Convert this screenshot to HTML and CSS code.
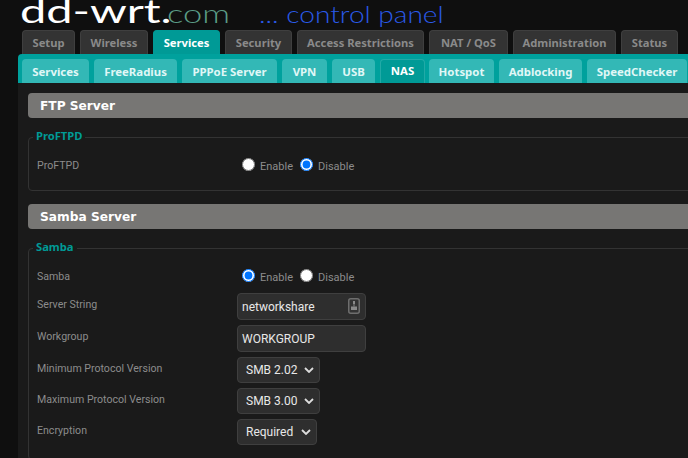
FILE: index.html
```html
<!DOCTYPE html>
<html>
<head>
    <title>DD-WRT control panel</title>
    <link rel="stylesheet" href="styles.css">
</head>
<body>
    <div class="header">
        <div class="logo-name"><span>dd-wrt.</span></div>
        <div class="logo-com"><span>com</span></div>
        <div class="logo-panel"><span>... control panel</span></div>
    </div>

    <div class="menu">
        <a class="tab w-setup">Setup</a>
        <a class="tab w-wireless">Wireless</a>
        <a class="tab active w-services">Services</a>
        <a class="tab w-security">Security</a>
        <a class="tab w-access">Access Restrictions</a>
        <a class="tab w-nat">NAT / QoS</a>
        <a class="tab w-admin">Administration</a>
        <a class="tab w-status">Status</a>
    </div>

    <div class="panel">
        <div class="submenu">
            <a class="subtab s-services">Services</a>
            <a class="subtab s-radius">FreeRadius</a>
            <a class="subtab s-pppoe">PPPoE Server</a>
            <a class="subtab s-vpn">VPN</a>
            <a class="subtab s-usb">USB</a>
            <a class="subtab active s-nas">NAS</a>
            <a class="subtab s-hotspot">Hotspot</a>
            <a class="subtab s-adblock">Adblocking</a>
            <a class="subtab s-speed">SpeedChecker</a>
        </div>

        <div class="content">
            <h2>FTP Server</h2>
            <fieldset class="ftp">
                <legend>ProFTPD</legend>
                <div class="row radio-row">
                    <label>ProFTPD</label>
                    <div class="radios">
                        <input type="radio" name="ftp"><span class="opt">Enable</span>
                        <input type="radio" name="ftp" checked><span class="opt">Disable</span>
                    </div>
                </div>
            </fieldset>

            <h2>Samba Server</h2>
            <fieldset class="samba">
                <legend>Samba</legend>
                <div class="row radio-row">
                    <label>Samba</label>
                    <div class="radios">
                        <input type="radio" name="smb" checked><span class="opt">Enable</span>
                        <input type="radio" name="smb"><span class="opt">Disable</span>
                    </div>
                </div>
                <div class="row">
                    <label>Server String</label>
                    <div class="field">
                        <input class="text" type="text" value="networkshare">
                        <svg class="key-icon" width="12" height="16" viewBox="0 0 12 16">
                            <rect x="0.75" y="0.75" width="10.5" height="14.5" rx="2" fill="#333" stroke="#6e6e6e" stroke-width="1.5"/>
                            <rect x="5" y="3" width="2" height="3" fill="#8a8a8a"/>
                            <rect x="5.4" y="6" width="1.2" height="2.5" fill="#777"/>
                            <rect x="3" y="8.5" width="6" height="3.5" fill="#8a8a8a"/>
                        </svg>
                    </div>
                </div>
                <div class="row">
                    <label>Workgroup</label>
                    <div class="field">
                        <input class="text" type="text" value="WORKGROUP">
                    </div>
                </div>
                <div class="row sel-row">
                    <label>Minimum Protocol Version</label>
                    <select class="sel sel-wide"><option>SMB 2.02</option></select>
                </div>
                <div class="row sel-row">
                    <label>Maximum Protocol Version</label>
                    <select class="sel sel-wide"><option>SMB 3.00</option></select>
                </div>
                <div class="row sel-row">
                    <label>Encryption</label>
                    <select class="sel sel-short"><option>Required</option></select>
                </div>
            </fieldset>
        </div>
    </div>
</body>
</html>
```

FILE: styles.css
```css
html, body {
    margin: 0;
    padding: 0;
    height: 458px;
    overflow: hidden;
}

body {
    width: 688px;
    background-color: #0f0f0f;
    font-family: "Roboto", "Noto Sans", sans-serif;
    color: #8c8c8c;
}

/* logo strip */
.header {
    height: 30px;
    display: flex;
    overflow: hidden;
    font-family: "Lato", sans-serif;
    white-space: nowrap;
}

.header span {
    display: block;
    transform-origin: left top;
}

.logo-name {
    width: 147px;
    margin-left: 20px;
    font-size: 33px;
    line-height: 34px;
    color: #fff;
}

.logo-name span {
    margin-top: -7px;
    transform: scaleX(1.42);
}

.logo-com {
    width: 92px;
    font-size: 25px;
    font-weight: 300;
    line-height: 30px;
    color: #5b9c86;
}

.logo-com span {
    margin-top: -2px;
    transform: scaleX(1.38);
}

.logo-panel {
    font-size: 23px;
    font-weight: 300;
    line-height: 28px;
    color: #2a5ae8;
}

.logo-panel span {
    transform: scaleX(1.22);
}

/* main tabs */
.menu {
    display: flex;
    gap: 5px;
    padding-left: 22px;
    height: 24px;
}

.tab {
    box-sizing: border-box;
    height: 24px;
    background-color: #333;
    border: 1px solid #3f3f3f;
    border-bottom: none;
    border-radius: 4px 4px 0 0;
    font-family: "Noto Sans", sans-serif;
    font-weight: bold;
    font-size: 11.2px;
    line-height: 24px;
    text-align: center;
    color: #8a8a8a;
    white-space: nowrap;
}

.tab.active {
    background-color: #009a96;
    border-color: #009a96;
    color: #fff;
}

.w-setup { width: 53px; }
.w-wireless { width: 68px; }
.w-services { width: 67px; }
.w-security { width: 67px; }
.w-access { width: 127px; }
.w-nat { width: 79px; }
.w-admin { width: 103px; }
.w-status { width: 57px; }

/* sub tabs and content */
.panel {
    margin-left: 18px;
    width: 720px;
}

.submenu {
    display: flex;
    gap: 5px;
    height: 24px;
    padding: 5px 0 0 4px;
    background-color: #00a19d;
    border-radius: 4px 0 0 0;
}

.subtab {
    flex: none;
    box-sizing: border-box;
    height: 24px;
    background-color: #33b8b6;
    border-radius: 4px 4px 0 0;
    font-family: "Noto Sans", sans-serif;
    font-weight: bold;
    font-size: 11.4px;
    line-height: 25px;
    text-align: center;
    color: #e0f7f6;
    white-space: nowrap;
}

.subtab.active {
    background-color: #009a96;
    border: 1px solid #22aaa7;
    border-bottom: none;
    color: #fff;
    line-height: 22px;
}

.s-services { width: 67px; }
.s-radius { width: 83px; }
.s-pppoe { width: 95px; }
.s-vpn { width: 45px; }
.s-usb { width: 43px; }
.s-nas { width: 45px; }
.s-hotspot { width: 65px; margin-left: -1px; }
.s-adblock { width: 83px; }
.s-speed { width: 100px; }

.content {
    background-color: #1a1a1a;
    height: 375px;
    padding: 10px 0 0 10px;
    box-sizing: border-box;
}

h2 {
    margin: 0;
    height: 25px;
    padding-left: 12px;
    background-color: #777674;
    border-radius: 4px 0 0 4px;
    font-family: "DejaVu Sans", sans-serif;
    font-size: 12.2px;
    font-weight: bold;
    line-height: 27px;
    color: #fff;
}

fieldset {
    margin: 11px 0 0 0;
    padding: 0 0 0 8px;
    border: 1px solid #333;
    border-radius: 4px;
}

.ftp {
    height: 62px;
    box-sizing: border-box;
    margin-bottom: 13px;
}

.samba {
    height: 220px;
    box-sizing: border-box;
}

legend {
    padding: 0 3px 2px;
    margin-left: -4px;
    font-family: "Noto Sans", sans-serif;
    font-weight: bold;
    font-size: 11.2px;
    line-height: 14px;
    color: #009a96;
}

.row {
    display: flex;
    height: 32px;
    font-size: 10.6px;
}

.row label {
    width: 200px;
    flex: none;
    line-height: 15px;
    padding-top: 4px;
}

.radio-row {
    height: 28px;
    padding-top: 9px;
}

.radios {
    display: flex;
    align-items: flex-start;
    font-size: 11px;
    line-height: 15px;
}

.radios input {
    margin: 4px 5px 0 5px;
}

.opt {
    padding-top: 5px;
    margin-right: 2px;
}

.field {
    position: relative;
}

.text {
    box-sizing: border-box;
    width: 129px;
    height: 27px;
    padding: 0 4px;
    background-color: #2e2e2e;
    border: 1px solid #3f3f3f;
    border-radius: 4px;
    font-family: "Roboto", sans-serif;
    font-size: 12px;
    color: #e8e8e8;
}

.key-icon {
    position: absolute;
    left: 111px;
    top: 5px;
}

.sel-row {
    height: 31px;
}

.sel {
    appearance: none;
    box-sizing: border-box;
    height: 26px;
    padding: 0 0 0 8px;
    background-color: #2e2e2e;
    background-image: url("data:image/svg+xml,%3Csvg xmlns='http://www.w3.org/2000/svg' width='10' height='6'%3E%3Cpath d='M1 1l4 4 4-4' fill='none' stroke='%23ddd' stroke-width='1.8'/%3E%3C/svg%3E");
    background-repeat: no-repeat;
    background-position: right 5px center;
    border: 1px solid #3f3f3f;
    border-radius: 4px;
    font-family: "Roboto", sans-serif;
    font-size: 12px;
    color: #e8e8e8;
}

.sel-wide {
    width: 83px;
}

.sel-short {
    width: 80px;
}
```
